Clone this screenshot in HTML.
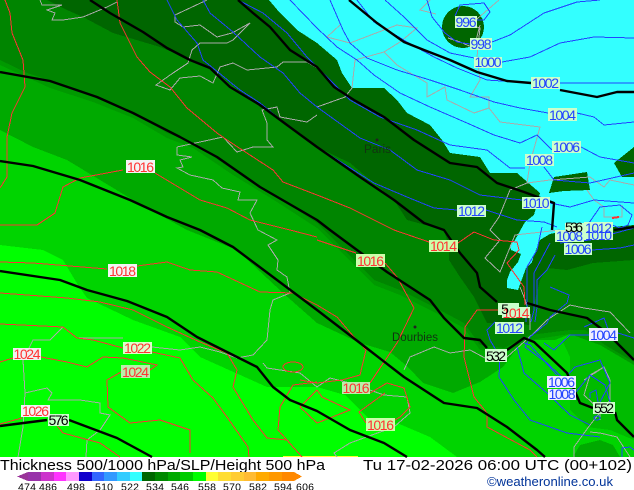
<!DOCTYPE html>
<html><head><meta charset="utf-8"><style>
html,body{margin:0;padding:0;background:#fff}
svg{display:block}
text{font-family:"Liberation Sans",sans-serif}
.k{fill:none;stroke:#000;stroke-width:2.4;stroke-linejoin:round;shape-rendering:auto}
.r{fill:none;stroke:#ff3333;stroke-width:1}
.b{fill:none;stroke:#2244ff;stroke-width:1}
.g{fill:none;stroke:#aaaaaa;stroke-width:1}
.lb text{font-size:14px;text-anchor:middle}
</style></head><body>
<svg width="634" height="490" viewBox="0 0 634 490" xmlns="http://www.w3.org/2000/svg">
<rect width="634" height="490" fill="#fff"/>
<g shape-rendering="crispEdges">
<rect width="634" height="457" fill="#00ff00"/>
<polygon fill="#00d400" points="0,0 634,0 634,457 457,457 430,437 397,423 380,430 370,420 345,395 317,387 267,387 200,357 180,337 133,320 87,298 78,285 63,260 43,250 0,245"/>
<polygon fill="#00bb00" points="563,342 570,357 570,410 587,427 610,430 634,440 634,365 600,345 570,334"/>
<polygon fill="#00aa00" points="0,130 33,147 67,160 100,180 133,200 187,230 237,250 283,293 317,323 360,343 390,352 408,367 423,383 453,393 480,382 503,367 523,340 555,340 570,334 600,345 634,365 634,0 0,0"/>
<polygon fill="#00aa00" points="573,457 580,445 600,440 613,445 620,457"/>
<polygon fill="#009900" points="0,65 50,88 93,102 133,118 167,138 193,148 233,175 277,202 317,228 374,285 400,295 434,312 464,328 480,350 504,353 530,340 570,334 600,345 634,365 634,0 0,0"/>
<polygon fill="#008500" points="0,60 27,73 57,83 93,97 133,113 167,133 193,143 233,170 277,197 317,223 374,280 400,290 434,307 464,323 480,345 504,348 530,335 570,330 585,330 605,345 634,362 634,0 0,0"/>
<polygon fill="#006600" points="47,0 67,10 83,17 113,33 160,47 187,58 217,73 260,107 300,133 317,147 350,163 394,200 407,220 444,230 449,247 449,260 460,277 474,297 487,323 504,323 530,325 535,300 540,280 547,268 567,270 593,263 634,260 634,0"/>
<polygon fill="#33ffff" points="269,0 280,13 297,30 317,43 337,60 342,73 352,88 384,88 397,100 407,113 430,125 442,140 450,153 480,157 490,173 517,173 540,193 534,215 525,222 515,240 510,245 511,250 521,254 518,262 510,272 507,280 507,288 518,290 526,268 532,262 534,255 540,240 550,234 559,232 634,225 634,0"/>
<ellipse cx="463" cy="27" rx="21" ry="21" fill="#006600"/>
<polygon fill="#006600" points="549,193 554,177 587,172 590,190 564,191"/>
<polygon fill="#006600" points="614,163 634,147 634,177 622,177"/>
<rect x="283" y="456" width="75" height="1" fill="#ffff33"/>
</g>

<g shape-rendering="crispEdges">
<!-- coast -->
<polyline class="g" points="40,0 42,5 62,5 47,10 55,13 52,20 63,20 83,17 95,12 107,7 117,2"/>
<polyline class="g" points="207,0 175,15 175,22 183,27 200,25 217,37 232,33 250,23 233,40 227,43 200,43 192,50 188,63 173,73 163,80 156,85 170,90 180,78 200,76 213,83 220,67 233,63 247,70 277,67 283,62 307,62 317,68"/>
<polyline class="g" points="177,147 177,155 192,157 180,160 183,167 177,168 190,175 213,180 222,188 240,192 238,200 257,200 250,213 258,230 277,240 268,245 278,260 277,270 287,277 290,293 273,300 270,310 267,340 253,355 237,358 220,352 200,347 180,350 152,347"/>
<polyline class="g" points="123,338 77,338 63,327 50,340 33,340 23,360 25,393 23,427 18,457"/>
<polyline class="g" points="177,147 200,142 223,137 237,152 253,147 273,147 267,140 267,123 262,110 277,107 280,117 307,122 317,115"/>
<polyline class="g" points="25,393 47,388 52,393 48,400 80,400 100,403 100,413 110,415 100,430 87,440 86,457"/>
<polyline class="g" points="263,363 267,368 300,373 317,387 330,378 350,383 384,395 407,397 410,413 394,427 350,443 334,453 337,457"/>
<polyline class="g" points="317,107 345,97 352,88 355,60 384,52 400,42 417,28 397,25 350,43 327,37 340,25"/>
<polyline class="g" points="384,52 397,65 427,83 427,97 445,87 447,100 474,113 489,108 489,97 470,97 480,80 477,57 480,28 470,25 499,0"/>
<polyline class="g" points="489,108 500,122 540,127 530,163 527,183 510,190 499,217 490,230 500,240 485,258 500,272 515,235 560,230"/>
<polyline class="g" points="527,183 550,180 590,177 604,187 610,180 634,185"/>
<polyline class="g" points="587,190 594,200 604,207 604,217 622,217 622,205"/>
<polyline class="g" points="404,370 410,357 434,347 450,353 470,350 485,358 507,357 534,333 547,320 570,305 584,308 610,312 630,333"/>
<polyline class="g" points="520,287 524,297 530,315 530,330"/>
<polyline class="g" points="584,380 604,367 610,380 610,400 590,425 574,447 574,457"/>
<polyline class="g" points="590,432 600,433 617,437 630,457"/>
<polyline class="g" points="604,367 590,375 584,395 600,410 600,420"/>
<polyline class="g" points="430,0 420,10 436,14"/>
<polyline class="g" points="448,38 460,42 474,48 480,25"/>
<!-- red -->
<polyline class="r" points="5,0 10,13 12,33 23,60 25,87 12,113 7,137 7,177 0,188"/>
<polyline class="r" points="0,225 37,225 55,213 63,187 80,178 123,170"/>
<polyline class="r" points="155,173 200,200 227,208 250,220 290,230 317,237"/>
<polyline class="r" points="117,0 120,23 137,57 150,72 170,87 187,108 217,133 230,142 273,170 283,182 317,195 350,208 394,230 429,242"/>
<polyline class="r" points="458,243 474,232 494,240 517,242 519,250 507,263 524,287 525,305"/>
<polyline class="r" points="0,262 33,263 107,269"/>
<polyline class="r" points="137,266 167,262 190,270 217,272 260,292 293,293 317,305 337,317 354,337 366,350 360,375 342,380 317,383 300,380"/>
<polyline class="r" points="317,240 356,253"/>
<polyline class="r" points="385,263 397,277 414,308 397,343 384,362 370,383"/>
<polyline class="r" points="0,293 67,298 100,302 133,310 167,327 200,342 227,353 237,370 233,387 253,420 267,438 287,440 302,457"/>
<polyline class="r" points="0,324 63,327 77,338 93,340 123,348"/>
<polyline class="r" points="152,352 180,358 193,380 213,398 227,417 248,447 249,457"/>
<polyline class="r" points="0,362 13,358"/>
<polyline class="r" points="41,357 67,362 87,367 103,357 123,358 157,365 150,370"/>
<polyline class="r" points="121,372 107,380 108,407 130,423 160,420 190,430 190,453"/>
<polyline class="r" points="0,424 22,418"/>
<polyline class="r" points="50,417 63,433 100,443 120,457"/>
<polyline class="r" points="317,382 293,385 280,407 278,430 302,457"/>
<polyline class="r" points="317,390 300,407 317,423 350,410 322,397 317,390"/>
<ellipse class="r" cx="293" cy="367" rx="10" ry="5"/>
<polyline class="r" points="370,393 387,383 404,388 410,407 400,417 395,420"/>
<polyline class="r" points="366,423 359,412 385,393"/>
<polyline class="r" points="499,310 477,310 465,327 464,357 474,397 487,413 487,427 530,450 537,457"/>
<polyline class="r" points="612,218 619,217" style="stroke-width:2"/>
<!-- blue -->
<polyline class="b" points="477,20 484,20 490,12 484,3 460,5 455,16"/>
<polyline class="b" points="427,0 432,17 445,33 457,42 470,44"/>
<polyline class="b" points="492,42 510,35 544,13 577,2 600,0"/>
<polyline class="b" points="385,0 404,17 427,40 450,53 474,58"/>
<polyline class="b" points="502,62 530,57 560,43 594,37 634,38"/>
<polyline class="b" points="357,0 374,22 407,42 434,57 457,68 487,80 531,83"/>
<polyline class="b" points="560,83 634,83"/>
<polyline class="b" points="330,0 343,30 350,43 367,58 397,70 430,80 460,90 494,102 520,108 548,113"/>
<polyline class="b" points="577,113 594,117 604,125 634,122"/>
<polyline class="b" points="290,0 317,28 337,47 357,60 374,75 400,93 430,107 467,123 494,135 520,143 537,135 552,150"/>
<polyline class="b" points="581,147 600,157 634,163"/>
<polyline class="b" points="238,0 263,13 287,33 307,57 317,67 350,100 380,117 417,130 450,145 487,150 510,168 525,168"/>
<polyline class="b" points="544,167 554,180 590,183 634,173"/>
<polyline class="b" points="203,0 210,13 233,32 260,57 283,73 300,93 317,107 360,138 390,150 417,170 450,180 480,195 522,200"/>
<polyline class="b" points="550,203 570,207 594,200 634,203"/>
<polyline class="b" points="167,0 177,20 197,43 203,60 240,90 260,103 297,133 317,147 374,183 407,197 434,208 457,210"/>
<polyline class="b" points="486,210 517,220 544,222 557,227"/>
<polyline class="b" points="542,227 537,250 527,267 527,307 526,322"/>
<polyline class="b" points="550,243 534,273 534,310 531,322"/>
<polyline class="b" points="555,255 547,270 537,280 537,307 535,322"/>
<polyline class="b" points="550,287 569,295 567,303 550,317 547,323 530,337 525,347 547,363 570,385"/>
<polyline class="b" points="495,322 487,330 490,340 500,357 499,377 514,400 530,420 567,433 600,437"/>
<polyline class="b" points="517,347 524,373 547,393 570,415 590,425"/>
<polyline class="b" points="524,343 530,345 557,375"/>
<polyline class="b" points="544,343 554,350 570,335 589,335"/>
<polyline class="b" points="584,327 604,318 612,340"/>
<polyline class="b" points="618,333 634,338"/>
<polyline class="b" points="567,376 575,367 600,360 610,383 600,402"/>
<polyline class="b" points="576,392 590,375 605,385 610,402"/>
<polyline class="b" points="590,398 590,393 596,390 598,402"/>
<ellipse class="b" cx="597" cy="418" rx="3" ry="2"/>
<polyline class="b" points="580,236 600,207 620,205 632,215 628,225 620,228 612,225"/>
<polyline class="b" points="622,457 622,448 630,447 634,450"/>
<polyline class="b" points="560,243 590,240 634,228"/>
<polyline class="b" points="592,250 620,248 634,245"/>
</g>

<!-- thickness lines -->
<polyline class="k" points="349,0 377,23 404,42 424,50 450,60 477,72 507,81 531,83"/>
<polyline class="k" points="560,90 597,97 617,92 634,92"/>
<polyline class="k" points="238,0 253,13 270,27 290,50 317,67 334,87 354,100 384,117 414,140 450,163 477,167 497,183 524,192 554,203 552,230"/>
<polyline class="k" points="614,230 634,227"/>
<polyline class="k" points="90,0 110,13 143,32 167,48 190,60 210,68 230,87 260,105 287,125 317,147 360,177 394,200 424,223 444,230 460,253 477,273 480,287 497,302"/>
<polyline class="k" points="527,303 550,310 587,318 607,333 634,360"/>
<polyline class="k" points="0,72 50,81 97,97 133,113 180,137 217,157 260,187 317,220 330,230 357,250 387,272 430,300 444,318 464,338 480,340 487,348"/>
<polyline class="k" points="507,350 524,338 534,342 567,373 580,403 593,408"/>
<polyline class="k" points="615,412 617,420 634,437"/>
<polyline class="k" points="0,161 33,166 80,180 130,200 167,217 200,230 233,247 277,280 317,310 360,343 404,377 444,403 477,408 507,427 537,450 545,457"/>
<polyline class="k" points="0,271 60,280 87,290 127,301 167,317 197,337 233,355 257,367 273,387 290,400 317,411 350,430 384,443 407,457"/>
<polyline class="k" points="0,426 47,420"/>
<polyline class="k" points="69,420 117,438 152,457"/>

<!-- towns -->
<circle cx="377" cy="140" r="1.5" fill="#222"/>
<circle cx="415" cy="327" r="1.5" fill="#222"/>
<text x="364" y="153" font-size="11.5" fill="#113311" textLength="27" lengthAdjust="spacingAndGlyphs">Paris</text>
<text x="392" y="341" font-size="11.5" fill="#113311" textLength="46" lengthAdjust="spacingAndGlyphs">Dourbies</text>

<!-- labels -->
<g class="lb">
<g fill="#ccffcc" shape-rendering="crispEdges">
<rect x="455" y="16" width="22" height="12"/><rect x="470" y="38" width="22" height="12"/>
<rect x="474" y="57" width="28" height="11"/><rect x="531" y="77" width="29" height="12"/>
<rect x="548" y="108" width="29" height="13"/><rect x="552" y="141" width="29" height="12"/>
<rect x="525" y="154" width="29" height="12"/><rect x="522" y="197" width="28" height="12"/>
<rect x="457" y="205" width="29" height="12"/>
<rect x="565" y="223" width="20" height="9"/><rect x="584" y="222" width="29" height="12"/>
<rect x="584" y="230" width="29" height="10"/><rect x="555" y="230" width="29" height="12"/>
<rect x="564" y="243" width="28" height="12"/>
<rect x="429" y="240" width="29" height="12" fill="#ccffaa"/>
<rect x="356" y="254" width="29" height="13" fill="#ccffaa"/>
<rect x="498" y="303" width="21" height="12"/><rect x="502" y="307" width="28" height="11"/>
<rect x="495" y="322" width="29" height="12"/>
<rect x="485" y="349" width="22" height="13"/><rect x="593" y="402" width="22" height="12"/>
<rect x="342" y="382" width="28" height="12" fill="#bbeeaa"/>
<rect x="366" y="418" width="29" height="13" fill="#ccffaa"/>
<rect x="121" y="365" width="29" height="13" fill="#bbeeaa"/>
<rect x="123" y="342" width="29" height="12" fill="#ddffcc"/>
<rect x="48" y="414" width="21" height="12"/>
<rect x="126" y="160" width="29" height="13" fill="#f4f4f4"/>
<rect x="108" y="264" width="29" height="13" fill="#f4f4f4"/>
<rect x="13" y="348" width="28" height="12" fill="#f0f0f0"/>
<rect x="21" y="405" width="29" height="12" fill="#f4f4f4"/>
<rect x="589" y="328" width="29" height="13" fill="#eeeeff"/>
<rect x="547" y="376" width="29" height="12" fill="#eeeeff"/>
<rect x="548" y="389" width="28" height="11" fill="#eeeeff"/>
</g>
<g fill="#2244ff">
<text x="466" y="27" textLength="21">996</text><text x="481" y="49" textLength="21">998</text>
<text x="488" y="67" textLength="27">1000</text><text x="545.5" y="88" textLength="27">1002</text>
<text x="562.5" y="120" textLength="27">1004</text><text x="566.5" y="152" textLength="27">1006</text>
<text x="539.5" y="165" textLength="27">1008</text><text x="536" y="208" textLength="27">1010</text>
<text x="471.5" y="216" textLength="27">1012</text>
<text x="598.5" y="240" textLength="27">1010</text>
<text x="569.5" y="241" textLength="27">1008</text><text x="598.5" y="233" textLength="27">1012</text>
<text x="578" y="254" textLength="27">1006</text>
<text x="509.5" y="333" textLength="27">1012</text><text x="603.5" y="340" textLength="27">1004</text>
<text x="561.5" y="387" textLength="27">1006</text><text x="562" y="399" textLength="27">1008</text>
</g>
<g fill="#ff3333">
<text x="140.5" y="172" textLength="27">1016</text><text x="122.5" y="276" textLength="27">1018</text>
<text x="443.5" y="251" textLength="27">1014</text><text x="370.5" y="266" textLength="27">1016</text>
<text x="516" y="318" textLength="27">1014</text>
<text x="137.5" y="353" textLength="27">1022</text><text x="27" y="359" textLength="27">1024</text>
<text x="135.5" y="377" textLength="27">1024</text><text x="35.5" y="416" textLength="27">1026</text>
<text x="356" y="393" textLength="27">1016</text><text x="380.5" y="430" textLength="27">1016</text>
</g>
<g fill="#000">
<text x="58.5" y="425" textLength="20">576</text>
<text x="496" y="361" textLength="20">532</text>
<text x="604" y="413" textLength="20">552</text>
<text x="505" y="314">5</text>
<text x="574" y="232" textLength="18">536</text>
</g>
</g>

<!-- footer -->
<text x="0" y="470" font-size="14.5" fill="#000" textLength="325" lengthAdjust="spacingAndGlyphs">Thickness 500/1000 hPa/SLP/Height 500 hPa</text>
<text x="363" y="470" font-size="14.5" fill="#000" textLength="269" lengthAdjust="spacingAndGlyphs">Tu 17-02-2026 06:00 UTC (00+102)</text>
<text x="487" y="486" font-size="13" fill="#003399" textLength="126" lengthAdjust="spacingAndGlyphs">©weatheronline.co.uk</text>

<g shape-rendering="crispEdges">
<polygon points="17,476.5 28,472 28,481" fill="#993399"/>
<rect x="28" y="472" width="13" height="9" fill="#9933aa"/>
<rect x="41" y="472" width="13" height="9" fill="#cc33cc"/>
<rect x="54" y="472" width="12" height="9" fill="#ff33ff"/>
<rect x="66" y="472" width="13" height="9" fill="#ff99ff"/>
<rect x="79" y="472" width="13" height="9" fill="#1100cc"/>
<rect x="92" y="472" width="12" height="9" fill="#3366ff"/>
<rect x="104" y="472" width="13" height="9" fill="#3399ff"/>
<rect x="117" y="472" width="13" height="9" fill="#33ccff"/>
<rect x="130" y="472" width="12" height="9" fill="#33ffff"/>
<rect x="142" y="472" width="13" height="9" fill="#006600"/>
<rect x="155" y="472" width="13" height="9" fill="#008800"/>
<rect x="168" y="472" width="12" height="9" fill="#00aa00"/>
<rect x="180" y="472" width="13" height="9" fill="#00cc00"/>
<rect x="193" y="472" width="13" height="9" fill="#00ff00"/>
<rect x="206" y="472" width="12" height="9" fill="#ffff33"/>
<rect x="218" y="472" width="13" height="9" fill="#ffdd33"/>
<rect x="231" y="472" width="13" height="9" fill="#ffcc33"/>
<rect x="244" y="472" width="12" height="9" fill="#ffbb33"/>
<rect x="256" y="472" width="13" height="9" fill="#ffaa00"/>
<rect x="269" y="472" width="13" height="9" fill="#ff9900"/>
<rect x="282" y="472" width="12" height="9" fill="#ff8800"/>
<polygon points="294,472 302,476.5 294,481" fill="#ff8800"/>
</g>
<g font-size="10.5" fill="#000" text-anchor="middle">
<text x="27" y="490.5" textLength="18">474</text><text x="48" y="490.5" textLength="18">486</text>
<text x="76" y="490.5" textLength="18">498</text><text x="104" y="490.5" textLength="18">510</text>
<text x="130" y="490.5" textLength="18">522</text><text x="155" y="490.5" textLength="18">534</text>
<text x="180" y="490.5" textLength="18">546</text><text x="207" y="490.5" textLength="18">558</text>
<text x="232" y="490.5" textLength="18">570</text><text x="258" y="490.5" textLength="18">582</text>
<text x="283" y="490.5" textLength="18">594</text><text x="305" y="490.5" textLength="18">606</text>
</g>
</svg>
</body></html>
